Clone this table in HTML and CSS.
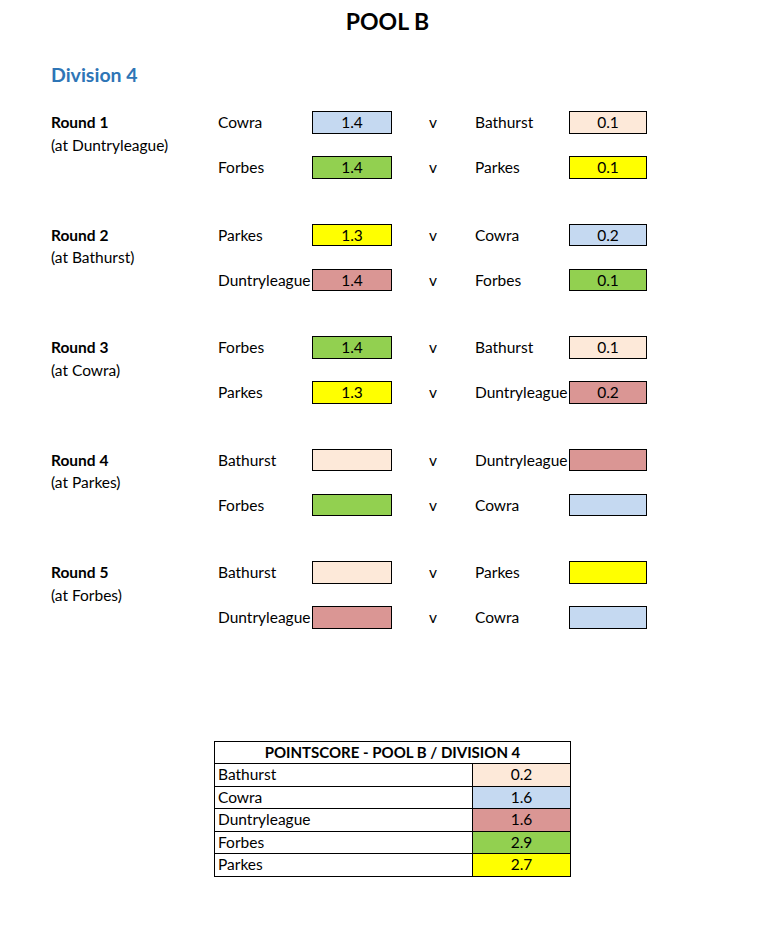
FILE: index.html
```html
<!DOCTYPE html>
<html>
<head>
<meta charset="utf-8">
<link rel="stylesheet" href="styles.css">
</head>
<body>
<div class="page">
  <h1 class="title">POOL B</h1>
  <h2 class="division">Division 4</h2>

  <div class="rounds">
    <div class="round">
      <div class="label"><b>Round 1</b></div>
      <div class="venue">(at Duntryleague)</div>
      <div class="team r1">Cowra</div><div class="box blue r1">1.4</div><div class="vs r1">v</div><div class="team2 r1">Bathurst</div><div class="box2 peach r1">0.1</div>
      <div class="team r3">Forbes</div><div class="box green r3">1.4</div><div class="vs r3">v</div><div class="team2 r3">Parkes</div><div class="box2 yellow r3">0.1</div>
    </div>
    <div class="round">
      <div class="label"><b>Round 2</b></div>
      <div class="venue">(at Bathurst)</div>
      <div class="team r1">Parkes</div><div class="box yellow r1">1.3</div><div class="vs r1">v</div><div class="team2 r1">Cowra</div><div class="box2 blue r1">0.2</div>
      <div class="team r3">Duntryleague</div><div class="box red r3">1.4</div><div class="vs r3">v</div><div class="team2 r3">Forbes</div><div class="box2 green r3">0.1</div>
    </div>
    <div class="round">
      <div class="label"><b>Round 3</b></div>
      <div class="venue">(at Cowra)</div>
      <div class="team r1">Forbes</div><div class="box green r1">1.4</div><div class="vs r1">v</div><div class="team2 r1">Bathurst</div><div class="box2 peach r1">0.1</div>
      <div class="team r3">Parkes</div><div class="box yellow r3">1.3</div><div class="vs r3">v</div><div class="team2 r3">Duntryleague</div><div class="box2 red r3">0.2</div>
    </div>
    <div class="round">
      <div class="label"><b>Round 4</b></div>
      <div class="venue">(at Parkes)</div>
      <div class="team r1">Bathurst</div><div class="box peach r1"></div><div class="vs r1">v</div><div class="team2 r1">Duntryleague</div><div class="box2 red r1"></div>
      <div class="team r3">Forbes</div><div class="box green r3"></div><div class="vs r3">v</div><div class="team2 r3">Cowra</div><div class="box2 blue r3"></div>
    </div>
    <div class="round">
      <div class="label"><b>Round 5</b></div>
      <div class="venue">(at Forbes)</div>
      <div class="team r1">Bathurst</div><div class="box peach r1"></div><div class="vs r1">v</div><div class="team2 r1">Parkes</div><div class="box2 yellow r1"></div>
      <div class="team r3">Duntryleague</div><div class="box red r3"></div><div class="vs r3">v</div><div class="team2 r3">Cowra</div><div class="box2 blue r3"></div>
    </div>
  </div>

  <table class="points">
    <tr><th colspan="2">POINTSCORE - POOL B / DIVISION 4</th></tr>
    <tr><td class="name">Bathurst</td><td class="val peach">0.2</td></tr>
    <tr><td class="name">Cowra</td><td class="val blue">1.6</td></tr>
    <tr><td class="name">Duntryleague</td><td class="val red">1.6</td></tr>
    <tr><td class="name">Forbes</td><td class="val green">2.9</td></tr>
    <tr><td class="name">Parkes</td><td class="val yellow">2.7</td></tr>
  </table>
</div>
</body>
</html>
```
FILE: styles.css
```css
html, body {
  margin: 0;
  padding: 0;
  background: #fff;
}
body {
  font-family: Lato, "Open Sans", sans-serif;
  font-size: 15.5px;
  color: #000;
}
.page {
  width: 768px;
}
.title {
  margin: 0;
  padding: 3px 0 0 7px;
  height: 36px;
  line-height: 36px;
  font-size: 23px;
  font-weight: 700;
  text-align: center;
}
.division {
  margin: 0;
  padding: 23px 0 0 51px;
  height: 26px;
  line-height: 26px;
  font-size: 19.5px;
  font-weight: 700;
  color: #2E75B6;
}
.rounds {
  padding: 23px 0 0 51px;
}
.round {
  display: grid;
  grid-template-columns: 167px 94px 80px 83px 94px 78px;
  grid-template-rows: 22.5px 22.5px 22.5px;
  margin-bottom: 45px;
  line-height: 22.5px;
}
.label { grid-column: 1; grid-row: 1; }
.venue { grid-column: 1; grid-row: 2; }
.r1 { grid-row: 1; }
.r3 { grid-row: 3; }
.team { grid-column: 2; white-space: nowrap; }
.box { grid-column: 3; }
.vs { grid-column: 4; padding-left: 37px; }
.team2 { grid-column: 5; white-space: nowrap; }
.box2 { grid-column: 6; }
.box, .box2 {
  border: 1px solid #000;
  box-sizing: border-box;
  text-align: center;
  line-height: 20.5px;
}
.blue { background: #C5D9F1; }
.peach { background: #FDE9D9; }
.green { background: #92D050; }
.yellow { background: #FFFF00; }
.red { background: #DA9694; }

.points {
  margin: 112px 0 0 214px;
  border-collapse: collapse;
  width: 357px;
}
.points th, .points td {
  border: 1px solid #000;
  height: 21.5px;
  padding: 0;
  line-height: 21px;
}
.points th {
  font-size: 15px;
  font-weight: 700;
  text-align: center;
}
.points .name {
  padding-left: 3px;
  text-align: left;
}
.points .val {
  width: 97px;
  text-align: center;
}
```
